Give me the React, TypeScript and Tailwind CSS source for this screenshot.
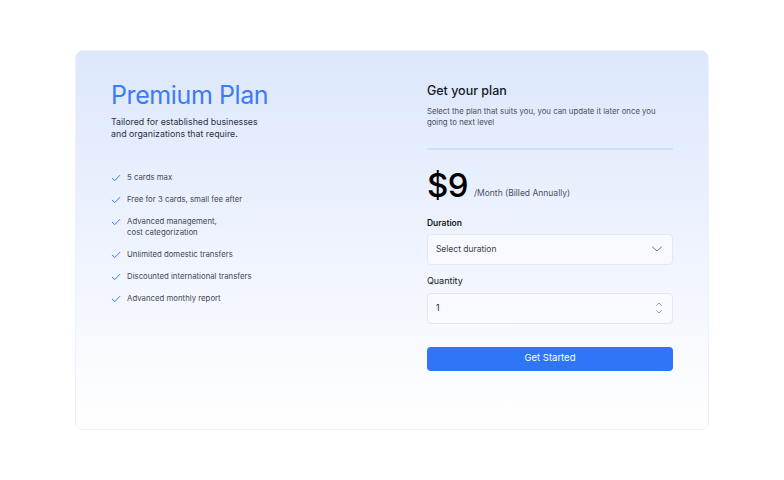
import React from "react";

const features: string[][] = [
  ["5 cards max"],
  ["Free for 3 cards, small fee after"],
  ["Advanced management,", "cost categorization"],
  ["Unlimited domestic transfers"],
  ["Discounted international transfers"],
  ["Advanced monthly report"],
];

function Check() {
  return (
    <svg width="10" height="10" viewBox="0 0 10 10" fill="none" className="mt-[1px] shrink-0">
      <path d="M1.2 5.2 L3.8 7.6 L8.8 2.4" stroke="#3b7bf5" strokeWidth="1" strokeLinecap="round" strokeLinejoin="round" />
    </svg>
  );
}

export default function App() {
  return (
    <div className="w-[784px] h-[480px] bg-white pt-[50px] pl-[75px]" style={{ fontFamily: "Inter, 'Liberation Sans', sans-serif" }}>
      <div className="w-[634px] h-[380px] rounded-[8px] border border-[#eef1f6] bg-gradient-to-b from-[#dde7fc] to-[#ffffff] flex pl-[35px] pr-[35px] pt-[28px]">
        <div className="w-[317px] flex flex-col">
          <h1 className="text-[25px] leading-[32px] text-[#3b7bf5] font-normal tracking-[-0.4px]">Premium Plan</h1>
          <p className="mt-[5px] text-[8.8px] leading-[12px] text-[#2d3340]">
            Tailored for established businesses
            <br />
            and organizations that require.
          </p>
          <ul className="mt-[32px] flex flex-col gap-[11px]">
            {features.map((f, i) => (
              <li key={i} className="flex items-start gap-[6px]">
                <Check />
                <div className="text-[7.8px] leading-[11px] text-[#434957]">
                  {f.map((l, j) => (
                    <div key={j}>{l}</div>
                  ))}
                </div>
              </li>
            ))}
          </ul>
        </div>
        <div className="w-[247px] flex flex-col">
          <h2 className="mt-[3px] text-[12.5px] leading-[18px] text-[#151922] font-medium">Get your plan</h2>
          <p className="mt-[6px] text-[7.8px] leading-[11px] text-[#4a5060]">
            Select the plan that suits you, you can update it later once you
            <br />
            going to next level
          </p>
          <div className="mt-[20px] h-[1.5px] bg-[#cfe0fb]" />
          <div className="mt-[17px] flex items-end gap-[6px]">
            <span className="text-[33px] leading-[36px] text-black tracking-[-0.5px] font-medium">$9</span>
            <span className="mb-[4px] text-[8.5px] leading-[11px] text-[#4a5060]">/Month (Billed Annually)</span>
          </div>
          <label className="mt-[14px] text-[8.5px] leading-[12px] font-semibold text-[#151922]">Duration</label>
          <div className="mt-[5px] h-[31px] rounded-[4px] border border-[#e2e7f0] bg-[#f7f9fe] flex items-center justify-between pl-[8px] pr-[9px]">
            <span className="text-[8.5px] text-[#3a404c]">Select duration</span>
            <svg width="12" height="8" viewBox="0 0 12 8" fill="none">
              <path d="M1.5 2 L6 6 L10.5 2" stroke="#6b7280" strokeWidth="1" strokeLinecap="round" strokeLinejoin="round" />
            </svg>
          </div>
          <label className="mt-[10px] text-[9px] leading-[12px] text-[#151922]">Quantity</label>
          <div className="mt-[6px] h-[31px] rounded-[4px] border border-[#e2e7f0] bg-[#f8faff] flex items-center justify-between pl-[8px] pr-[9px]">
            <span className="text-[8.5px] text-[#151922]">1</span>
            <svg width="8" height="14" viewBox="0 0 8 14" fill="none">
              <path d="M1.5 4.5 L4 2 L6.5 4.5" stroke="#8a909c" strokeWidth="0.9" strokeLinecap="round" strokeLinejoin="round" />
              <path d="M1.5 9.5 L4 12 L6.5 9.5" stroke="#8a909c" strokeWidth="0.9" strokeLinecap="round" strokeLinejoin="round" />
            </svg>
          </div>
          <button className="mt-[23px] h-[24px] rounded-[4px] bg-[#2f76f6] text-white text-[9.5px]">Get Started</button>
        </div>
      </div>
    </div>
  );
}
